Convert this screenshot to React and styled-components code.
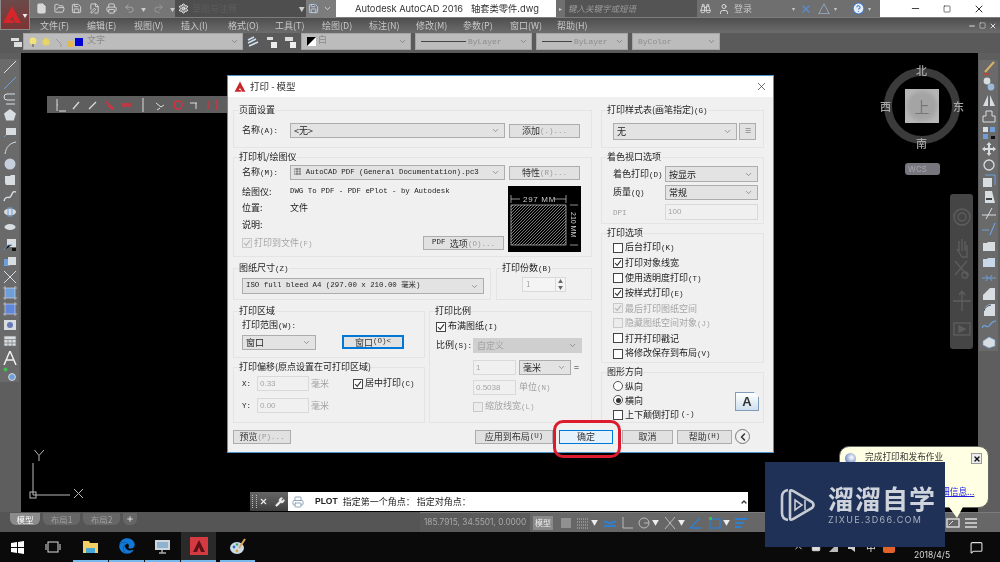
import React from 'react'
import styled, { createGlobalStyle } from 'styled-components'
import { File, FolderOpen, Save, FilePen, Printer, Undo2, Redo2, Settings, ChevronDown, ChevronUp, ChevronLeft, Binoculars, User, CircleHelp, Minus, Square, X, Wrench, Plus, MessageSquare } from 'lucide-react'
import { FaEdge } from 'react-icons/fa'

const CJK = `"Noto Sans CJK SC", "Liberation Sans", sans-serif`

const Global = createGlobalStyle`
    html, body { margin: 0; padding: 0; background: #000; overflow: hidden; }
    * { box-sizing: border-box; }
`

const Screen = styled.div`
    position: relative;
    width: 1000px;
    height: 562px;
    overflow: hidden;
    display: flex;
    flex-direction: column;
    font-family: ${CJK};
    font-size: 9px;
    line-height: 1;
    filter: blur(0.45px);
    background: #5b5b5b;
`

/* ---------- top chrome ---------- */
const Head = styled.div`
    display: flex;
    height: 33px;
`
const AppButton = styled.div`
    width: 30px;
    height: 30px;
    display: flex;
    align-items: center;
    justify-content: center;
    background: linear-gradient(#6b4a4a, #7d3434);
    border: 1px solid #8a8a8a;
    border-top: 0;
    flex: none;
`
const HeadRight = styled.div`
    flex: 1;
    display: flex;
    flex-direction: column;
`
const TitleRow = styled.div`
    height: 17px;
    display: flex;
`
const TitleSeg = styled.div`
    width: ${p => p.$w}px;
    background: ${p => p.$bg};
    display: flex;
    align-items: center;
    gap: ${p => p.$gap || 0}px;
    padding-left: ${p => p.$pl || 0}px;
    color: ${p => p.$color || '#ddd'};
    flex: none;
    white-space: nowrap;
`
const DocTitle = styled.span`
    font-size: 9.3px;
    font-family: "Inter", ${CJK};
    color: #333;
    white-space: pre;
`
const SearchBox = styled.div`
    width: 132px;
    height: 17px;
    background: #545454;
    color: #9a9a9a;
    font-style: italic;
    font-size: 8.5px;
    padding: 4px 0 0 3px;
    margin-left: 3px;
    flex: none;
`
const Small = styled.span`
    color: ${p => p.$color || '#ddd'};
    font-size: ${p => p.$size || 9}px;
    margin-left: ${p => p.$ml || 0}px;
    flex: none;
`
const IconSlot = styled.span`
    display: flex;
    margin-left: ${p => p.$ml || 0}px;
    flex: none;
`
const MenuBar = styled.div`
    height: 16px;
    display: flex;
    align-items: center;
    padding-left: 10px;
    background: linear-gradient(#4f4f4f, #6c6c6c);
    border-top: 1px solid #7d7d7d;
`
const MenuItem = styled.span`
    width: 47px;
    color: #c9c9c9;
    font-size: 9px;
    white-space: nowrap;
    flex: none;
`
const WinButtons = styled.div`
    margin-left: auto;
    display: flex;
    gap: 3px;
    align-items: center;
    padding-right: 3px;
`
const ToolBar = styled.div`
    height: 20px;
    padding: 0 0 3px 9px;
    display: flex;
    align-items: stretch;
    background: #5a5a5a;
`
const ToolCombo = styled.div`
    width: ${p => p.$w}px;
    margin-left: ${p => p.$ml || 0}px;
    background: #bcbcbc;
    border: 1px solid #a5a5a5;
    display: flex;
    align-items: center;
    gap: 2px;
    padding: 0 3px 0 5px;
    color: #8d8d8d;
    font-family: "Liberation Mono", ${CJK};
    font-size: 8px;
    flex: none;
`
const Push = styled.span`
    margin-left: auto;
    display: flex;
`
const ToolSlot = styled.div`
    display: flex;
    align-items: center;
    gap: ${p => p.$gap || 0}px;
    padding-left: ${p => p.$pl || 0}px;
    flex: none;
`

/* ---------- workspace ---------- */
const Work = styled.div`
    flex: 1;
    display: flex;
    min-height: 0;
`
const Palette = styled.div`
    width: ${p => p.$w}px;
    flex: none;
    background: #5e5e5e;
    padding-top: ${p => p.$pt}px;
`
const PaletteInner = styled.div`
    display: flex;
    flex-direction: column;
    align-items: center;
    width: 19px;
    margin-left: ${p => p.$ml || 0}px;
    background: #6a6a6a;
`
const PaletteCell = styled.div`
    height: 16.15px;
    display: flex;
    align-items: center;
    justify-content: center;
`
const Canvas = styled.div`
    flex: 1;
    background: #000;
`

/* ---------- bottom bars ---------- */
const LayoutBar = styled.div`
    height: 20px;
    display: flex;
    background: #555;
`
const Tabs = styled.div`
    width: 420px;
    display: flex;
    align-items: flex-start;
    gap: 3px;
    padding-left: 10px;
`
const Tab = styled.div`
    width: ${p => p.$w || 37}px;
    height: 12px;
    border-radius: 0 0 6px 6px;
    background: ${p => (p.$active ? '#8b8b8b' : '#666')};
    color: ${p => (p.$active ? '#fff' : '#a0a0a0')};
    font-size: 8.5px;
    display: flex;
    align-items: center;
    justify-content: center;
    margin-top: 1px;
`
const Status = styled.div`
    flex: 1;
    display: flex;
    align-items: center;
    background: #676767;
    border-top: 1px solid #7b7b7b;
`
const Coords = styled.div`
    width: 110px;
    height: 19px;
    padding: 5px 0 0 4px;
    background: #5a5a5a;
    color: #a8a8a8;
    font-family: "Inter", sans-serif;
    font-size: 8.3px;
    white-space: nowrap;
    margin-right: 3px;
`
const ModelBtn = styled.div`
    width: 20px;
    height: 14px;
    background: #8a8a8a;
    color: #eee;
    font-size: 8px;
    display: flex;
    align-items: center;
    justify-content: center;
    margin-right: 4px;
`
const StatusIcon = styled.div`
    width: ${p => p.$w || 17}px;
    display: flex;
    justify-content: center;
    flex: none;
    margin-left: ${p => p.$ml || 0}px;
`
const Taskbar = styled.div`
    height: 30px;
    background: #0a0a0a;
    display: flex;
    align-items: stretch;
`
const TaskSlot = styled.div`
    width: ${p => p.$w || 35}px;
    margin-left: ${p => p.$ml || 0}px;
    display: flex;
    align-items: center;
    justify-content: center;
    flex: none;
    border-bottom: ${p => (p.$open ? '2px solid #76b9ed' : '0')};
    background: ${p => (p.$active ? '#2a2a2a' : 'transparent')};
`
const TrayIcons = styled.div`
    margin-left: auto;
    display: flex;
    align-items: center;
    gap: 7px;
    color: #ddd;
    font-size: 10px;
`
const Clock = styled.div`
    margin-left: 5px;
    width: 100px;
    display: flex;
    align-items: flex-end;
    color: #d8d8d8;
    font-family: "Inter", sans-serif;
    font-size: 8.5px;
    padding: 0 0 3px 14px;
    justify-content: space-between;
`
const NotifyIcon = styled(MessageSquare)`
    margin: 0 17px 5px 0;
`

/* ---------- floating on the canvas ---------- */
const Floater = styled.div`
    position: absolute;
    left: 47px;
    top: 96px;
    width: 180px;
    height: 17px;
    background: #5e5e5e;
    display: flex;
    align-items: center;
    padding-left: 5px;
`
const FloatCell = styled.div`
    width: 16.8px;
    display: flex;
    justify-content: center;
    flex: none;
`
const Compass = styled.div`
    position: absolute;
    left: 884px;
    top: 68px;
    width: 76px;
    height: 76px;
    border-radius: 50%;
    border: 8px solid #3b3b3b;
    display: flex;
    align-items: center;
    justify-content: center;
`
const CompassFace = styled.div`
    width: 34px;
    height: 34px;
    background: radial-gradient(#a4a4a4 50%, #b6b6b6 75%);
    color: #777;
    font-size: 15px;
    display: flex;
    align-items: center;
    justify-content: center;
    flex: none;
`
const CompassDir = styled.span`
    position: absolute;
    color: #a8a8a8;
    font-size: 11px;
    font-weight: 500;
    left: ${p => p.$x}px;
    top: ${p => p.$y}px;
`
const WcsPill = styled.div`
    position: absolute;
    left: 905px;
    top: 163px;
    width: 35px;
    height: 12px;
    border-radius: 3px;
    background: #77757e;
    color: #a9a9ae;
    font-family: "Inter", sans-serif;
    font-size: 8px;
    padding: 2px 0 0 3px;
`
const NavBar = styled.div`
    position: absolute;
    left: 950px;
    top: 194px;
    width: 23px;
    height: 155px;
    border-radius: 3px;
    background: #454545;
    display: flex;
    flex-direction: column;
    align-items: center;
    padding-top: 13px;
    gap: 1px;
`
const UcsIcon = styled.svg`
    position: absolute;
    left: 24px;
    top: 448px;
`
const Command = styled.div`
    position: absolute;
    left: 250px;
    top: 492px;
    width: 498px;
    height: 19px;
    display: flex;
`
const CommandTools = styled.div`
    width: 38px;
    background: linear-gradient(#666, #3f3f3f);
    display: flex;
    align-items: center;
    gap: 7px;
    padding-left: 9px;
    flex: none;
    position: relative;
    &::before {
        content: '';
        position: absolute;
        left: 2px;
        top: 3px;
        bottom: 3px;
        width: 3px;
        border-left: 1px dotted #bbb;
        border-right: 1px dotted #bbb;
    }
`
const CommandText = styled.div`
    flex: 1;
    background: #fff;
    display: flex;
    align-items: center;
    padding-left: 4px;
    color: #222;
    font-size: 9px;
`
const PlotWord = styled.b`
    font-family: "Liberation Sans", sans-serif;
    font-size: 8.5px;
    margin: 0 5px 0 11px;
`
const Balloon = styled.div`
    position: absolute;
    left: 839px;
    top: 446px;
    width: 150px;
    height: 62px;
    background: #ffffe3;
    border-radius: 10px;
    border: 1px solid #666;
    padding: 6px 0 0 25px;
    font-size: 8.7px;
    color: #333;
    &::after {
        content: '';
        position: absolute;
        left: 109px;
        bottom: -11px;
        border-left: 8px solid transparent;
        border-right: 6px solid transparent;
        border-top: 11px solid #ffffe3;
    }
`
const BalloonLink = styled.span`
    position: absolute;
    left: 101px;
    top: 41px;
    color: #1a1ae0;
    text-decoration: underline;
`
const BalloonClose = styled.span`
    position: absolute;
    left: 131px;
    top: 6px;
    width: 11px;
    height: 11px;
    background: #eee;
    border: 1px solid #999;
    display: flex;
    align-items: center;
    justify-content: center;
`
const BalloonGlobe = styled.span`
    position: absolute;
    left: 5px;
    top: 6px;
    width: 11px;
    height: 11px;
    border-radius: 50%;
    background: radial-gradient(circle at 60% 40%, #fff, #3a5fb0);
`
const Watermark = styled.div`
    position: absolute;
    left: 765px;
    top: 462px;
    width: 180px;
    height: 85px;
    background: #1f3157;
    display: flex;
    align-items: center;
    gap: 12px;
    padding-left: 15px;
`
const WatermarkText = styled.div`
    display: flex;
    flex-direction: column;
    gap: 4px;
    color: #cfd3dc;
`
const WatermarkName = styled.div`
    font-size: 26px;
    font-weight: 700;
    letter-spacing: 1px;
    line-height: 26px;
`
const WatermarkUrl = styled.div`
    font-family: "Inter", sans-serif;
    font-size: 9px;
    letter-spacing: 1.35px;
    color: #a9afbd;
`

/* ---------- plot dialog ---------- */
const Dialog = styled.div`
    position: absolute;
    left: 227px;
    top: 75px;
    width: 547px;
    height: 378px;
    background: #f0f0f0;
    border: 1px solid #4e93c9;
    display: flex;
    flex-direction: column;
    color: #222;
`
const DialogTitle = styled.div`
    height: 21px;
    background: #fff;
    display: flex;
    align-items: center;
    gap: 4px;
    padding-left: 6px;
    font-size: 9.5px;
    color: #333;
    flex: none;
`
const DialogClose = styled.span`
    margin-left: auto;
    margin-right: 5px;
    display: flex;
`
const DialogBody = styled.div`
    flex: 1;
    display: flex;
    flex-direction: column;
    padding: 7px 0 0 5px;
`
const Columns = styled.div`
    display: flex;
    gap: 9px;
`
const Column = styled.div`
    width: ${p => p.$w}px;
    display: flex;
    flex-direction: column;
    gap: 3px;
    flex: none;
`
const Pair = styled.div`
    display: flex;
    gap: ${p => p.$gap || 4}px;
    margin-top: 2px;
`
const Stack = styled.div`
    display: flex;
    flex-direction: column;
    gap: 3px;
    width: ${p => p.$w}px;
    flex: none;
`
const Group = styled.fieldset`
    margin: 0;
    min-width: 0;
    width: ${p => (p.$w ? `${p.$w}px` : 'auto')};
    height: ${p => p.$h}px;
    border: 1px solid #e4e4e4;
    padding: ${p => p.$pad || '0 0 0 8px'};
    flex: none;
`
const Legend = styled.legend`
    padding: 0;
    margin-left: ${p => p.$ml ?? -3}px;
    height: 12px;
    line-height: 12px;
    font-size: 9px;
    color: #222;
    background: #f0f0f0;
`
const Key = styled.span`
    font-family: "Liberation Mono", monospace;
    font-size: 7.5px;
`
const Row = styled.div`
    display: flex;
    align-items: ${p => (p.$top ? 'flex-start' : 'center')};
    margin-top: ${p => p.$mt || 0}px;
    margin-left: ${p => p.$ml || 0}px;
    gap: ${p => p.$gap || 0}px;
    height: ${p => (p.$h ? `${p.$h}px` : 'auto')};
`
const Label = styled.span`
    display: inline-block;
    width: ${p => (p.$w ? `${p.$w}px` : 'auto')};
    margin-top: ${p => p.$mt || 0}px;
    color: ${p => (p.$muted ? '#a0a0a0' : '#222')};
    white-space: nowrap;
    flex: none;
`
const ComboBox = styled.div`
    width: ${p => p.$w}px;
    height: ${p => p.$h || 15}px;
    margin-top: ${p => p.$mt || 0}px;
    background: ${p => (p.$disabled ? '#cfcfcf' : '#e3e3e3')};
    border: 1px solid ${p => (p.$disabled ? '#d0d0d0' : '#adadad')};
    color: ${p => (p.$disabled ? '#a3a3a3' : '#222')};
    display: flex;
    align-items: center;
    padding: 0 4px 0 3px;
    white-space: nowrap;
    flex: none;
`
const Mono = styled.span`
    font-family: "Liberation Mono", ${CJK};
    font-size: 7.4px;
    white-space: pre;
    color: ${p => p.$color || '#222'};
`
const Button = styled.div`
    width: ${p => p.$w}px;
    height: ${p => p.$h || 14}px;
    margin-left: ${p => p.$ml || 0}px;
    background: ${p => (p.$primary ? '#e5f1fb' : '#e1e1e1')};
    border: ${p => (p.$primary ? '1px solid #0078d7' : p.$focus ? '2px solid #0078d7' : '1px solid #adadad')};
    display: flex;
    align-items: center;
    justify-content: center;
    white-space: nowrap;
    color: #333;
    flex: none;
`
const Faint = styled.span`
    color: #9a9a9a;
`
const Field = styled.div`
    width: ${p => p.$w}px;
    height: ${p => p.$h || 15}px;
    background: #f0f0f0;
    border: 1px solid #d9d9d9;
    color: #a5a5a5;
    font-family: "Liberation Sans", sans-serif;
    font-size: 8px;
    padding: 3px 0 0 2px;
    flex: none;
`
const Copies = styled.div`
    display: flex;
    width: 44px;
    height: 15px;
    margin: 3px 0 0 17px;
    background: #f4f4f4;
    border: 1px solid #d9d9d9;
    color: #a5a5a5;
    font-size: 8px;
    padding: 2px 0 0 3px;
    position: relative;
`
const Spinner = styled.div`
    position: absolute;
    right: 0;
    top: 0;
    bottom: 0;
    width: 10px;
    border-left: 1px solid #d9d9d9;
    color: #666;
    font-size: 5px;
    text-align: center;
    line-height: 6px;
`
const CheckBox = styled.span`
    width: 10px;
    height: 10px;
    border: 1px solid ${p => (p.$disabled ? '#c9c9c9' : '#444')};
    background: ${p => (p.$disabled ? '#ececec' : '#fff')};
    display: flex;
    align-items: center;
    justify-content: center;
    flex: none;
`
const RadioDot = styled.span`
    width: 10px;
    height: 10px;
    border-radius: 50%;
    border: 1px solid #555;
    background: #fff;
    display: flex;
    align-items: center;
    justify-content: center;
    flex: none;
    &::after {
        content: '';
        width: 5px;
        height: 5px;
        border-radius: 50%;
        background: ${p => (p.$on ? '#333' : 'transparent')};
    }
`
const Option = styled.div`
    display: flex;
    align-items: center;
    gap: 2px;
    height: ${p => p.$h || 15.15}px;
    color: ${p => (p.$muted ? '#a5a5a5' : '#222')};
    margin-top: ${p => p.$mt || 0}px;
    margin-left: ${p => p.$ml || 0}px;
    white-space: nowrap;
`
const Info = styled.div`
    display: flex;
    flex-direction: column;
    width: 262px;
    margin-top: -3px;
    flex: none;
`
const InfoLine = styled.div`
    height: 16.5px;
    display: flex;
    align-items: center;
`
const PreviewSvg = styled.svg`
    margin: 0 0 0 4px;
    flex: none;
`
const OrientationRow = styled.div`
    display: flex;
    justify-content: space-between;
    padding-right: 4px;
`
const PaperA = styled.div`
    width: 24px;
    height: 19px;
    margin-top: 13px;
    background: linear-gradient(#fff, #cfe0ee);
    border: 1px solid #7f9db9;
    clip-path: polygon(0 0, 78% 0, 100% 28%, 100% 100%, 0 100%);
    color: #333;
    font-family: "Liberation Sans", sans-serif;
    font-size: 13px;
    font-weight: 700;
    display: flex;
    align-items: center;
    justify-content: center;
`
const Actions = styled.div`
    display: flex;
    align-items: center;
    margin-top: 6px;
`
const RoundBtn = styled.div`
    width: 15px;
    height: 15px;
    margin-left: 3px;
    border-radius: 50%;
    background: #f0f0f0;
    border: 1px solid #777;
    display: flex;
    align-items: center;
    justify-content: center;
`
const RedRing = styled.div`
    position: absolute;
    left: 553px;
    top: 420px;
    width: 68px;
    height: 38px;
    border: 3px solid #dc1c2e;
    border-radius: 10px;
    pointer-events: none;
`

const Chevron = () => <Push><ChevronDown size={9} color="#666" strokeWidth={1.6} /></Push>

const CheckMark = ({ muted }) => (
    <svg width="8" height="8" viewBox="0 0 8 8"><path d="M1 4 L3.2 6.4 L7 1.4" fill="none" stroke={muted ? '#b5b5b5' : '#333'} strokeWidth="1.1" /></svg>
)

const Check = ({ on, disabled, children, ml, mt }) => (
    <Option $muted={disabled} $ml={ml} $mt={mt}>
        <CheckBox $disabled={disabled}>{on && <CheckMark muted={disabled} />}</CheckBox>
        <span>{children}</span>
    </Option>
)

const CadLogo = ({ size = 18, color = '#d5262b' }) => (
    <svg width={size} height={size} viewBox="0 0 20 20">
        <path d="M10 1 L19 18 H13.5 L12 15 L10 11.5 L8 15 H10.8 L12 17 L12.6 18 H1 Z" fill={color} />
    </svg>
)

// 14x14 drawings for the side palettes
const blue = '#6f9fd8'
const pale = '#d8dde2'
const LEFT_ICONS = [
    <path d="M1 13 L13 1" stroke={pale} />,
    <path d="M1 13 L13 1 M3 11 h0.5 M11 3 h0.5" stroke={blue} />,
    <path d="M12 2 H4 a3 3 0 0 0 0 6 h8 M3 12 H12" stroke={pale} fill="none" />,
    <path d="M7 1 L13 5.5 L10.8 12.5 H3.2 L1 5.5 Z" fill={pale} />,
    <><rect x="3" y="3" width="10" height="7" fill={pale} /><path d="M1 12 L3 10" stroke={blue} /></>,
    <path d="M2 13 C3 6 7 2 13 1" stroke={pale} fill="none" />,
    <circle cx="7" cy="7" r="5.5" fill="#c6d0dc" />,
    <path d="M2 3 H7 L8 2 H12 V12 H3 L2 10 Z" fill={pale} />,
    <path d="M1 12 C3 5 6 11 8 7 S10 2 13 3" stroke={pale} fill="none" strokeWidth="1.4" />,
    <><ellipse cx="7" cy="7" rx="6" ry="3.4" fill={pale} /><rect x="5" y="3" width="4" height="8" fill="none" stroke={blue} /></>,
    <ellipse cx="7" cy="6" rx="5.5" ry="3" fill={pale} />,
    <><rect x="4" y="1" width="9" height="8" fill={pale} /><path d="M1 12 L5 7 h4" stroke={blue} /><rect x="9" y="10" width="4" height="3" fill="#111" /></>,
    <><rect x="1" y="5" width="6" height="7" fill={blue} /><rect x="5" y="3" width="8" height="8" fill={pale} /></>,
    <path d="M1 1 L13 13 M13 1 L1 13" stroke={pale} />,
    <><rect x="2" y="2" width="10" height="10" fill={blue} /><path d="M0 2 H14 M0 12 H14 M2 0 V14 M12 0 V14" stroke="#dde" strokeWidth="0.6" /></>,
    <><rect x="2" y="2" width="10" height="10" fill="#5f86d8" /><path d="M0 2 H14 M0 12 H14 M2 0 V14 M12 0 V14" stroke="#dde" strokeWidth="0.6" /></>,
    <><rect x="1" y="2" width="12" height="10" fill={pale} /><circle cx="7" cy="7" r="3" fill="#6a78b8" /></>,
    <path d="M1 2 H13 V12 H1 Z M1 5.5 H13 M1 9 H13 M5 5.5 V12 M9 5.5 V12" fill={pale} stroke="#777" strokeWidth="0.7" />,
    <path d="M1 14 L7 0 L13 14 M3.5 9 H10.5" stroke="#eee" fill="none" strokeWidth="1.5" />,
    <><circle cx="2.5" cy="2.5" r="2" fill="#3fbf4f" /><circle cx="9" cy="10" r="3.4" fill={blue} stroke={pale} /></>,
]
const RIGHT_ICONS = [
    <><path d="M3 11 L12 1" stroke="#d7b46a" strokeWidth="2" /><path d="M1 13 H8" stroke="#d23c2c" strokeWidth="1.4" /></>,
    <><circle cx="5" cy="4" r="3.4" fill={pale} /><circle cx="9" cy="10" r="3.4" fill="#9db8d8" /></>,
    <path d="M6 2 V13 H1 Z M8 2 V13 H13 Z" fill={pale} />,
    <path d="M4 2 h6 v5 h3 v6 H1 V7 h3 Z" fill="none" stroke={pale} />,
    <><rect x="1" y="1" width="5" height="5" fill={pale} /><rect x="8" y="1" width="5" height="5" fill={blue} /><rect x="1" y="8" width="5" height="5" fill={blue} /><rect x="9" y="10" width="4" height="3" fill="#111" /></>,
    <path d="M7 0 L9.5 3 H8 V6 H11 V4.5 L14 7 L11 9.5 V8 H8 V11 H9.5 L7 14 L4.5 11 H6 V8 H3 V9.5 L0 7 L3 4.5 V6 H6 V3 H4.5 Z" fill={pale} />,
    <circle cx="7" cy="7" r="5" fill="none" stroke={pale} strokeWidth="1.3" />,
    <><rect x="1" y="4" width="9" height="9" fill={pale} /><path d="M3 1 H13 V11" fill="none" stroke={blue} /></>,
    <><path d="M3 1 H10 L13 13 H3 Z" fill={pale} /><path d="M4 9 H10" stroke="#111" strokeWidth="1.5" /></>,
    <path d="M0 9 H14 M10 2 L4 13" stroke={pale} fill="none" />,
    <path d="M0 8 H7 M8 13 L13 1" stroke={blue} fill="none" strokeWidth="1.2" />,
    <path d="M1 4 H5 L6 3 H13 V12 H1 Z" fill={pale} />,
    <path d="M1 4 H5 L6 3 H13 V12 H1 Z" fill="#c9d8e8" />,
    <path d="M0 7 H14 M4 4 L6 7 L4 10 M10 4 L8 7 L10 10" stroke={blue} fill="none" />,
    <path d="M1 13 V8 L8 1 H13 V13 Z" fill={pale} />,
    <><path d="M2 13 V7 Q3 2 9 1 H13 V13 Z" fill={pale} /><path d="M2 8 Q3 3 9 2" stroke="#36506e" fill="none" /></>,
    <path d="M0 9 C3 3 5 11 8 6 S12 3 14 2" stroke={blue} fill="none" strokeWidth="1.4" />,
    <path d="M1 6 L7 2 L13 5 V11 L7 13 L1 10 Z" fill={pale} stroke={blue} strokeWidth="0.6" />,
]

const Ico = ({ children }) => (
    <svg width="14" height="14" viewBox="0 0 14 14" strokeWidth="1">{children}</svg>
)

const red = '#d8303e'
const wht = '#dcdcdc'
const FLOAT_ICONS = [
    <path d="M4 1 V13 M4 7 h1 M6 13 H13" stroke={wht} />,
    <path d="M3 11 L9 4" stroke={wht} strokeWidth="1.3" />,
    <path d="M2 11 L9 4" stroke={wht} strokeWidth="1.3" />,
    <path d="M1 3 L9 10 M4 8 L10 12" stroke={red} strokeWidth="1.3" />,
    <path d="M1 6 H10 M1 8 H10" stroke={red} strokeWidth="1.3" />,
    <path d="M6 0 V14" stroke={wht} />,
    <path d="M2 5 L7 9 L10 7 M6 10 L3 12" stroke={wht} fill="none" />,
    <circle cx="7" cy="7" r="4" stroke={red} strokeWidth="1.6" fill="none" />,
    <path d="M2 5 H9 M8 5 V11" stroke={wht} />,
    <path d="M3 3 V11 M10 3 h2 V11 h-2" stroke={red} strokeWidth="1.3" fill="none" />,
]

const MENU = ['文件(F)', '编辑(E)', '视图(V)', '插入(I)', '格式(O)', '工具(T)', '绘图(D)', '标注(N)', '修改(M)', '参数(P)', '窗口(W)', '帮助(H)']

const qc = '#d8d8d8'

function Chrome() {
    return <Head>
        <AppButton><CadLogo size={20} /><Small $size={5} $color="#eee">▼</Small></AppButton>
        <HeadRight>
            <TitleRow>
                <TitleSeg $w={145} $bg="#767676" $pl={6} $gap={6.5}>
                    <File size={11} color={qc} fill={qc} />
                    <FolderOpen size={11} color={qc} />
                    <Save size={11} color={qc} />
                    <FilePen size={11} color={qc} />
                    <Printer size={11} color={qc} />
                    <Undo2 size={11} color="#aaa" />
                    <Small $size={5} $color="#ccc">▼</Small>
                    <Redo2 size={11} color="#999" />
                    <Small $size={5} $color="#ccc">▼</Small>
                </TitleSeg>
                <TitleSeg $w={131} $bg="#4e4e4e" $pl={3}>
                    <Settings size={11} color="#eee" fill="#eee" fillOpacity={0.3} />
                    <Small $color="#5c5c5c" $ml={3}>草图与注释</Small>
                    <Push><Small $size={6} $color="#ccc">▼&nbsp;</Small></Push>
                </TitleSeg>
                <TitleSeg $w={30} $bg="#7c7c7c" $pl={2} $gap={4}>
                    <Save size={11} color="#b9d1f0" />
                    <ChevronDown size={9} color="#eee" />
                </TitleSeg>
                <TitleSeg $w={220} $bg="#fff" $pl={19}>
                    <DocTitle>Autodesk AutoCAD 2016   轴套类零件.dwg</DocTitle>
                </TitleSeg>
                <TitleSeg $w={324} $bg="#6f6f6f">
                    <Small $size={6} $ml={3} $color="#ccc">▸</Small>
                    <SearchBox>键入关键字或短语</SearchBox>
                    <IconSlot $ml={3}><Binoculars size={11} color="#ddd" /></IconSlot>
                    <IconSlot $ml={7}><User size={12} color="#ddd" /></IconSlot>
                    <Small $ml={4} $color="#c4c4c4">登录</Small>
                    <Small $ml={40} $size={6} $color="#ccc">▾</Small>
                    <IconSlot $ml={5}><X size={12} color="#5e89c9" strokeWidth={3} /></IconSlot>
                    <Small $ml={6} $size={12} $color="#a8c5ea">△</Small>
                    <Small $ml={4} $size={6} $color="#ccc">▾</Small>
                    <IconSlot $ml={15}><CircleHelp size={13} color="#3f78c8" fill="#e6edf7" /></IconSlot>
                    <Small $ml={3} $size={6} $color="#ccc">▾</Small>
                </TitleSeg>
                <TitleSeg $w={120} $bg="#fff" $pl={30} $gap={22}>
                    <Minus size={11} color="#333" />
                    <Square size={8} color="#333" />
                    <X size={12} color="#333" />
                </TitleSeg>
            </TitleRow>
            <MenuBar>
                {MENU.map(m => <MenuItem key={m}>{m}</MenuItem>)}
                <WinButtons>
                    <Minus size={8} color="#ddd" strokeWidth={3} />
                    <Square size={7} color="#ddd" />
                    <X size={8} color="#ddd" strokeWidth={3} />
                </WinButtons>
            </MenuBar>
        </HeadRight>
    </Head>
}

function LayerBar() {
    return <ToolBar>
        <ToolSlot><Ico><rect x="2" y="3" width="8" height="3" fill="#ddd" /><rect x="5" y="7" width="8" height="5" fill="#ddd" /></Ico></ToolSlot>
        <ToolCombo $w={220}>
            <svg width="56" height="12" viewBox="0 0 56 12">
                <circle cx="4" cy="5" r="3.5" fill="#f3e27a" />
                <rect x="3" y="8" width="2" height="3" fill="#888" />
                <circle cx="17" cy="6" r="3" fill="#e8d565" stroke="#e8d565" strokeDasharray="1 1" strokeWidth="2" />
                <path d="M27 3 L32 8 V11" stroke="#9a9a9a" fill="none" />
                <rect x="38" y="5" width="7" height="6" fill="#e2b84f" />
                <rect x="46" y="2" width="8" height="8" fill="#0000d0" />
            </svg>
            <Small $color="#8a8a8a" $size={9}>文字</Small>
            <Chevron />
        </ToolCombo>
        <ToolSlot $pl={3} $gap={5}>
            <Ico><path d="M2 5 L8 2 M2 8 L10 4 M3 11 L12 7" stroke="#cfe0f2" strokeWidth="1.6" /></Ico>
            <Ico><rect x="2" y="2" width="6" height="3" fill="#ddd" /><rect x="6" y="7" width="6" height="6" fill="#eee" /></Ico>
            <Ico><rect x="1" y="2" width="8" height="4" fill="#ddd" /><rect x="6" y="7" width="6" height="6" fill="#eee" /></Ico>
        </ToolSlot>
        <ToolCombo $w={110} $ml={3}>
            <svg width="9" height="9" viewBox="0 0 9 9"><rect width="9" height="9" fill="#fff" /><path d="M0 0 H9 L0 9 Z" fill="#000" /></svg>
            <Small $color="#8a8a8a" $size={9}>白</Small>
            <Chevron />
        </ToolCombo>
        <ToolCombo $w={117} $ml={4}>
            <svg width="45" height="2"><rect width="45" height="1" fill="#444" /></svg>
            ByLayer<Chevron />
        </ToolCombo>
        <ToolCombo $w={92} $ml={4}>
            <svg width="30" height="2"><rect width="30" height="1" fill="#444" /></svg>
            ByLayer<Chevron />
        </ToolCombo>
        <ToolCombo $w={88} $ml={4}>ByColor<Chevron /></ToolCombo>
    </ToolBar>
}

function PlotDialog() {
    return <Dialog>
        <DialogTitle>
            <CadLogo size={12} color="#c9262b" />
            <span>打印 - 模型</span>
            <DialogClose><X size={13} color="#333" strokeWidth={1.3} /></DialogClose>
        </DialogTitle>
        <DialogBody>
            <Columns>
                <Column $w={359}>
                    <Group $h={44}>
                        <Legend>页面设置</Legend>
                        <Row $mt={7}>
                            <Label $w={48}>名称<Key>(A):</Key></Label>
                            <ComboBox $w={215}>&lt;无&gt;<Chevron /></ComboBox>
                            <Button $w={71} $ml={4}>添加<Faint><Key>(.)...</Key></Faint></Button>
                        </Row>
                    </Group>
                    <Group $h={106}>
                        <Legend>打印机/绘图仪</Legend>
                        <Row $mt={2}>
                            <Label $w={48}>名称<Key>(M):</Key></Label>
                            <ComboBox $w={215}>
                                <Mono>▦ AutoCAD PDF (General Documentation).pc3</Mono>
                                <Chevron />
                            </ComboBox>
                            <Button $w={71} $ml={4}>特性<Faint><Key>(R)...</Key></Faint></Button>
                        </Row>
                        <Row $mt={6} $top>
                            <Info>
                                <InfoLine><Label $w={48}>绘图仪:</Label><Mono>DWG To PDF - PDF ePlot - by Autodesk</Mono></InfoLine>
                                <InfoLine><Label $w={48}>位置:</Label>文件</InfoLine>
                                <InfoLine><Label $w={48}>说明:</Label></InfoLine>
                                <Row $h={17} $mt={2}>
                                    <Check on disabled>打印到文件<Key>(F)</Key></Check>
                                    <Push><Button $w={81}><Mono>PDF </Mono>选项<Faint><Key>(O)...</Key></Faint></Button></Push>
                                </Row>
                            </Info>
                            <PreviewSvg width="73" height="66" viewBox="0 0 73 66">
                                <defs>
                                    <pattern id="hatch" width="3" height="3" patternUnits="userSpaceOnUse">
                                        <path d="M0 3 L3 0" stroke="#aaa" strokeWidth="0.7" />
                                    </pattern>
                                </defs>
                                <rect width="73" height="66" fill="#000" />
                                <rect x="3" y="19" width="55" height="40" fill="url(#hatch)" stroke="#ccc" strokeWidth="0.7" />
                                <path d="M3 13 H12 M47 13 H58 M3 9 V17 M58 9 V17 M62 19 H70 M62 59 H70" stroke="#ccc" strokeWidth="0.7" />
                                <text x="15" y="16" fontSize="8" fill="#ccc" fontFamily="Liberation Sans" letterSpacing="0.7">297 MM</text>
                                <text x="63" y="26" fontSize="7" fill="#ccc" fontFamily="Liberation Sans" transform="rotate(90 63 26)">210 MM</text>
                            </PreviewSvg>
                        </Row>
                    </Group>
                    <Pair $gap={5}>
                        <Group $w={258} $h={38}>
                            <Legend>图纸尺寸<Key>(Z)</Key></Legend>
                            <ComboBox $w={242} $h={16} $mt={4}>
                                <Mono>ISO full bleed A4 (297.00 x 210.00 毫米)</Mono>
                                <Chevron />
                            </ComboBox>
                        </Group>
                        <Group $w={96} $h={38}>
                            <Legend>打印份数<Key>(B)</Key></Legend>
                            <Copies>1<Spinner>▲<br />▼</Spinner></Copies>
                        </Group>
                    </Pair>
                    <Pair $gap={4}>
                        <Stack $w={192}>
                            <Group $h={53}>
                                <Legend>打印区域</Legend>
                                <Label $mt={3}>打印范围<Key>(W):</Key></Label>
                                <Row $mt={4}>
                                    <ComboBox $w={74} $h={15}>窗口<Chevron /></ComboBox>
                                    <Button $w={62} $ml={26} $focus>窗口<Key>(O)&lt;</Key></Button>
                                </Row>
                            </Group>
                            <Group $h={62}>
                                <Legend>打印偏移(原点设置在可打印区域)</Legend>
                                <Row $mt={3}>
                                    <Label $w={15}><Key>X:</Key></Label>
                                    <Field $w={52}>0.33</Field>
                                    <Label $w={44} $muted>&nbsp;毫米</Label>
                                    <Check on>居中打印<Key>(C)</Key></Check>
                                </Row>
                                <Row $mt={7}>
                                    <Label $w={15}><Key>Y:</Key></Label>
                                    <Field $w={52}>0.00</Field>
                                    <Label $muted>&nbsp;毫米</Label>
                                </Row>
                            </Group>
                        </Stack>
                        <Group $w={163} $h={118} $pad="0 0 0 6px">
                            <Legend $ml={-1}>打印比例</Legend>
                            <Check on mt={2}>布满图纸<Key>(I)</Key></Check>
                            <Row $mt={4}>
                                <Label $w={37}>比例<Key>(S):</Key></Label>
                                <ComboBox $w={109} $disabled>自定义<Chevron /></ComboBox>
                            </Row>
                            <Row $mt={7} $ml={37} $gap={3}>
                                <Field $w={43}>1</Field>
                                <ComboBox $w={52} $h={15}>毫米<Chevron /></ComboBox>
                                <Label>=</Label>
                            </Row>
                            <Row $mt={5} $ml={37} $gap={3}>
                                <Field $w={43}>0.5038</Field>
                                <Label $muted>单位<Key>(N)</Key></Label>
                            </Row>
                            <Check disabled ml={37} mt={4}>缩放线宽<Key>(L)</Key></Check>
                        </Group>
                    </Pair>
                </Column>
                <Column $w={163}>
                    <Group $h={44}>
                        <Legend>打印样式表(画笔指定)<Key>(G)</Key></Legend>
                        <Row $mt={7} $ml={3}>
                            <ComboBox $w={124} $h={17}>无<Chevron /></ComboBox>
                            <Button $w={17} $h={17} $ml={2}><Mono $color="#888">☰</Mono></Button>
                        </Row>
                    </Group>
                    <Group $h={73}>
                        <Legend>着色视口选项</Legend>
                        <Row $mt={3} $ml={3}>
                            <Label $w={52}>着色打印<Key>(D)</Key></Label>
                            <ComboBox $w={93} $h={16}>按显示<Chevron /></ComboBox>
                        </Row>
                        <Row $mt={3} $ml={3}>
                            <Label $w={52}>质量<Key>(Q)</Key></Label>
                            <ComboBox $w={93}>常规<Chevron /></ComboBox>
                        </Row>
                        <Row $mt={4} $ml={3}>
                            <Label $w={52} $muted><Key>DPI</Key></Label>
                            <Field $w={93} $h={16}>100</Field>
                        </Row>
                    </Group>
                    <Group $h={136} $pad="1px 0 0 11px">
                        <Legend $ml={-6}>打印选项</Legend>
                        <Check>后台打印<Key>(K)</Key></Check>
                        <Check on>打印对象线宽</Check>
                        <Check>使用透明度打印<Key>(T)</Key></Check>
                        <Check on>按样式打印<Key>(E)</Key></Check>
                        <Check on disabled>最后打印图纸空间</Check>
                        <Check disabled>隐藏图纸空间对象<Key>(J)</Key></Check>
                        <Check>打开打印戳记</Check>
                        <Check>将修改保存到布局<Key>(V)</Key></Check>
                    </Group>
                    <Group $h={57} $pad="1px 0 0 11px">
                        <Legend $ml={-6}>图形方向</Legend>
                        <OrientationRow>
                            <div>
                                <Option $h={14}><RadioDot />纵向</Option>
                                <Option $h={14}><RadioDot $on />横向</Option>
                                <Option $h={15}><CheckBox />上下颠倒打印<Key>(-)</Key></Option>
                            </div>
                            <PaperA>A</PaperA>
                        </OrientationRow>
                    </Group>
                </Column>
            </Columns>
            <Actions>
                <Button $w={58}>预览<Faint><Key>(P)...</Key></Faint></Button>
                <Button $w={78} $ml={184}>应用到布局<Key>(U)</Key></Button>
                <Button $w={54} $ml={6} $primary>确定</Button>
                <Button $w={51} $ml={9}>取消</Button>
                <Button $w={55} $ml={4}>帮助<Key>(H)</Key></Button>
                <RoundBtn><ChevronLeft size={12} color="#333" strokeWidth={3} /></RoundBtn>
            </Actions>
        </DialogBody>
    </Dialog>
}

function StatusBar() {
    const s = '#bbb'
    const b = '#2f7fd0'
    return <Status>
        <Coords>185.7915, 34.5501, 0.0000</Coords>
        <ModelBtn>模型</ModelBtn>
        <StatusIcon><Ico><path d="M3 2 V12 M5 2 V12 M7 2 V12 M9 2 V12 M11 2 V12" stroke={s} /></Ico></StatusIcon>
        <StatusIcon><Ico><path d="M1 3 H13 M1 6 H13 M1 9 H13 M1 12 H13" stroke={s} strokeDasharray="1 1" /></Ico></StatusIcon>
        <Small $size={7} $color="#eee">▼</Small>
        <StatusIcon $ml={3}><Ico><path d="M1 5 Q7 9 13 5 M1 10 H13" stroke={b} strokeWidth="2" fill="none" /></Ico></StatusIcon>
        <StatusIcon><Ico><path d="M3 1 V12 H13" stroke={s} fill="none" /></Ico></StatusIcon>
        <StatusIcon><Ico><circle cx="7" cy="7" r="5" stroke={s} fill="none" /><path d="M7 7 H12" stroke={s} /></Ico></StatusIcon>
        <Small $size={7} $color="#eee">▼</Small>
        <StatusIcon $ml={2}><Ico><path d="M2 1 L12 13 M12 1 L2 13" stroke={s} /></Ico></StatusIcon>
        <Small $size={7} $color="#eee">▼</Small>
        <StatusIcon $ml={2}><Ico><path d="M1 12 H13 M1 12 L11 2" stroke={b} strokeWidth="1.3" /></Ico></StatusIcon>
        <StatusIcon $ml={2}><Ico><rect x="2" y="3" width="10" height="9" stroke={b} fill="none" strokeWidth="1.3" /><rect x="1" y="1" width="3" height="3" fill="#2fbf4f" /></Ico></StatusIcon>
        <Small $size={7} $color="#eee">▼</Small>
        <StatusIcon $ml={2}><Ico><path d="M1 3 H13 M1 7 H10 M1 11 H7" stroke={b} strokeWidth="2" /></Ico></StatusIcon>
        <StatusIcon $w={14} $ml={178}><Ico><rect x="2" y="6" width="10" height="6" fill="#d6a05a" /><path d="M7 2 V7" stroke="#222" strokeWidth="1.5" /></Ico></StatusIcon>
        <StatusIcon $w={14} $ml={5}><Ico><rect x="1" y="3" width="12" height="8" fill="none" stroke="#ddd" strokeWidth="1.4" /><path d="M3 9 L7 5" stroke="#ddd" /></Ico></StatusIcon>
        <StatusIcon $w={14} $ml={4}><Ico><path d="M1 3 H13 M1 7 H13 M1 11 H13" stroke="#ddd" strokeWidth="1.4" /></Ico></StatusIcon>
    </Status>
}

function Tray() {
    return <Taskbar>
        <TaskSlot>
            <svg width="13" height="13" viewBox="0 0 13 13"><path d="M0 2 L6 1 V6 H0 Z M7 1 L13 0 V6 H7 Z M0 7 H6 V12 L0 11 Z M7 7 H13 V13 L7 12 Z" fill="#fff" /></svg>
        </TaskSlot>
        <TaskSlot>
            <svg width="16" height="12" viewBox="0 0 16 12"><rect x="3" y="1" width="10" height="10" fill="none" stroke="#ddd" /><path d="M1 3 V9 M15 3 V9" stroke="#ddd" /></svg>
        </TaskSlot>
        <TaskSlot $open $ml={3}>
            <svg width="17" height="15" viewBox="0 0 17 15"><path d="M1 2 H7 L8 4 H16 V14 H1 Z" fill="#f4cf63" /><rect x="4" y="9" width="9" height="5" fill="#4aa8d8" /></svg>
        </TaskSlot>
        <TaskSlot $open $ml={1}><FaEdge size={16} color="#1178d8" /></TaskSlot>
        <TaskSlot $open $ml={1}>
            <svg width="17" height="17" viewBox="0 0 17 17"><rect x="1" y="2" width="15" height="10" fill="#cfd6dc" /><rect x="3" y="4" width="11" height="6" fill="#8fb2d0" /><path d="M8 12 V15 M5 15 H12" stroke="#aaa" strokeWidth="1.5" /></svg>
        </TaskSlot>
        <TaskSlot $open $active $ml={1}>
            <svg width="18" height="18" viewBox="0 0 18 18"><rect width="18" height="18" fill="#d43a42" /><path d="M9 3 L15 15 H11 L9 10 L7 15 H3 Z" fill="#5e1015" /></svg>
        </TaskSlot>
        <TaskSlot $open $ml={4}>
            <svg width="18" height="17" viewBox="0 0 18 17"><ellipse cx="8" cy="10" rx="7" ry="6" fill="#c9dbe8" /><circle cx="5" cy="9" r="1.4" fill="#2d6fc4" /><circle cx="8" cy="6.5" r="1.2" fill="#3da34d" /><circle cx="8" cy="13" r="1.4" fill="#d8a43a" /><path d="M10 10 L16 1" stroke="#d9a35b" strokeWidth="2" /></svg>
        </TaskSlot>
        <TrayIcons>
            <ChevronUp size={11} color="#ddd" />
            <Square size={10} color="#ddd" fill="#ddd" />
            <svg width="12" height="11" viewBox="0 0 12 11"><path d="M1 10 L10 1 V10 Z" fill="#bbb" /></svg>
            <svg width="12" height="11" viewBox="0 0 12 11"><path d="M1 4 H4 L8 1 V10 L4 7 H1 Z" fill="#ccc" /></svg>
            <span>中</span>
            <svg width="12" height="12" viewBox="0 0 12 12"><rect width="12" height="12" rx="2" fill="#e2622a" /></svg>
        </TrayIcons>
        <Clock>
            <span>2018/4/5</span>
            <NotifyIcon size={13} color="#ddd" />
        </Clock>
    </Taskbar>
}

function App() {
    return <>
        <Global />
        <Screen>
            <Chrome />
            <LayerBar />
            <Work>
                <Palette $w={21} $pt={6}>
                    <PaletteInner>
                        {LEFT_ICONS.map((ic, i) => <PaletteCell key={i}><Ico>{ic}</Ico></PaletteCell>)}
                    </PaletteInner>
                </Palette>
                <Canvas />
                <Palette $w={22} $pt={7}>
                    <PaletteInner $ml={1}>
                        {RIGHT_ICONS.map((ic, i) => <PaletteCell key={i}><Ico>{ic}</Ico></PaletteCell>)}
                    </PaletteInner>
                </Palette>
            </Work>
            <LayoutBar>
                <Tabs>
                    <Tab $active $w={30}>模型</Tab>
                    <Tab>布局1</Tab>
                    <Tab>布局2</Tab>
                    <Tab $w={14}><Plus size={8} color="#ddd" strokeWidth={3} /></Tab>
                </Tabs>
                <StatusBar />
            </LayoutBar>
            <Tray />

            <Floater>
                {FLOAT_ICONS.map((ic, i) => <FloatCell key={i}><Ico>{ic}</Ico></FloatCell>)}
            </Floater>

            <Compass><CompassFace>上</CompassFace></Compass>
            <CompassDir $x={916} $y={65}>北</CompassDir>
            <CompassDir $x={916} $y={138}>南</CompassDir>
            <CompassDir $x={880} $y={101}>西</CompassDir>
            <CompassDir $x={953} $y={101}>东</CompassDir>
            <WcsPill>WCS</WcsPill>

            <NavBar>
                <svg width="18" height="130" viewBox="0 0 18 130" fill="none" stroke="#5d5d5d" strokeWidth="1.4">
                    <circle cx="9" cy="10" r="8" /><circle cx="9" cy="10" r="4" />
                    <path d="M6 44 V34 M9 44 V32 M12 44 V34 M4 42 L9 50 H14 V38" />
                    <path d="M2 54 L14 68 M14 54 L2 68" /><circle cx="12" cy="68" r="3" />
                    <path d="M9 84 V104 M-1 94 H19 M9 84 L6 88 M9 84 L12 88" />
                    <rect x="1" y="116" width="16" height="12" /><path d="M6 119 L12 122 L6 125 Z" fill="#5d5d5d" />
                </svg>
            </NavBar>

            <UcsIcon width="62" height="60" viewBox="0 0 62 60" fill="none" stroke="#b8b8b8">
                <path d="M9 15 V47 H46" />
                <rect x="6" y="44" width="6" height="6" />
                <path d="M10.5 2 L15 7.5 L20 2 M15 7.5 V13" />
                <path d="M50 41 L59 50 M59 41 L50 50" />
            </UcsIcon>

            <Command>
                <CommandTools>
                    <X size={9} color="#eee" strokeWidth={3} />
                    <Wrench size={10} color="#eee" fill="#eee" />
                </CommandTools>
                <CommandText>
                    <Printer size={12} color="#8fa5bd" />
                    <PlotWord>PLOT</PlotWord>
                    指定第一个角点：  指定对角点：
                    <Push><ChevronUp size={8} color="#333" strokeWidth={4} /></Push>
                </CommandText>
            </Command>

            <Balloon>
                <BalloonGlobe />
                完成打印和发布作业
                <BalloonClose><X size={8} color="#111" strokeWidth={4} /></BalloonClose>
                <BalloonLink>细信息...</BalloonLink>
            </Balloon>

            <PlotDialog />
            <RedRing />

            <Watermark>
                <svg width="36" height="36" viewBox="0 0 36 36" fill="none" stroke="#c7cbd4" strokeWidth="2.6">
                    <path d="M8 3 Q2 4 2 10 V26 Q2 32 8 33" />
                    <path d="M10 5 Q10 2 13 4 L32 15 Q35 18 32 21 L13 32 Q10 34 10 31 Z" />
                    <path d="M15 13 L22 18 L15 23 Z M25 13 V23" strokeWidth="1.6" />
                </svg>
                <WatermarkText>
                    <WatermarkName>溜溜自学</WatermarkName>
                    <WatermarkUrl>ZIXUE.3D66.COM</WatermarkUrl>
                </WatermarkText>
            </Watermark>
        </Screen>
    </>
}

export default App
